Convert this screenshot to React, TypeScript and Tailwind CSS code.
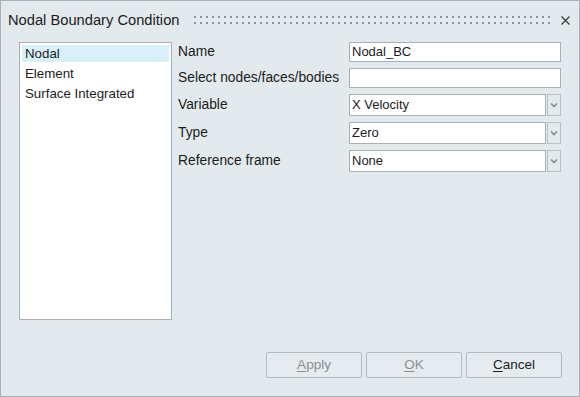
import React from 'react';

const rows = [
  { label: 'Name', value: 'Nodal_BC', kind: 'input', top: 'mt-0' },
  { label: 'Select nodes/faces/bodies', value: '', kind: 'input', top: 'mt-[6px]' },
  { label: 'Variable', value: 'X Velocity', kind: 'select', top: 'mt-[6px]' },
  { label: 'Type', value: 'Zero', kind: 'select', top: 'mt-[6px]' },
  { label: 'Reference frame', value: 'None', kind: 'select', top: 'mt-[6px]' },
];

const Chevron = () => (
  <svg width="8" height="6" viewBox="0 0 8 6" className="text-[#878c91]">
    <path d="M1 1.5 L4 4.5 L7 1.5" fill="none" stroke="currentColor" strokeWidth="1.7" />
  </svg>
);

const App: React.FC = () => {
  const dots = Array.from({ length: 62 });

  return (
    <div
      className="w-[580px] h-[397px] bg-[#e3eaee] border border-[#a9b0b5] flex flex-col text-[13px] text-[#1b1b22]"
      style={{ fontFamily: '"Liberation Sans", Arial, sans-serif' }}
    >
      {/* title bar */}
      <div className="h-[38px] flex items-center pl-[7px] pr-[9px]">
        <span className="text-[14.7px] leading-none">Nodal Boundary Condition</span>
        <div className="flex-1 flex flex-col gap-[4px] ml-[15px] mr-[9px] overflow-hidden">
          {[0, 1].map(r => (
            <div key={r} className="flex gap-[4px]">
              {dots.map((_, i) => (
                <span key={i} className="w-[2px] h-[2px] shrink-0 bg-[#8c9196]" />
              ))}
            </div>
          ))}
        </div>
        <svg width="9" height="9" viewBox="0 0 9 9" className="text-[#3a3d40]">
          <path d="M0.5 0.5 L8.5 8.5 M8.5 0.5 L0.5 8.5" stroke="currentColor" strokeWidth="1.3" />
        </svg>
      </div>

      {/* body */}
      <div className="flex pl-[18px] pt-[3px]">
        <div className="w-[153px] h-[278px] bg-white border border-[#a9b0b5] p-[2px] text-[13.3px]">
          <div className="h-[17px] bg-[#d9f0fa] pl-[3px] leading-[17px]">Nodal</div>
          <div className="h-[20px] pl-[3px] leading-[20px] mt-[2px]">Element</div>
          <div className="h-[20px] pl-[3px] leading-[20px]">Surface Integrated</div>
        </div>

        <div className="flex flex-col ml-[6px]">
          {rows.map(row => (
            <div key={row.label} className={`flex items-center ${row.top}`}>
              <div className="w-[171px] text-[13.8px] leading-[20px]">{row.label}</div>
              {row.kind === 'input' ? (
                <div className="w-[212px] h-[20px] bg-white border border-[#a9b0b5] pl-[2px] leading-[18px]">
                  {row.value}
                </div>
              ) : (
                <div className="flex h-[22px]">
                  <div className="w-[197px] h-[22px] bg-white border border-[#a9b0b5] pl-[2px] leading-[20px]">
                    {row.value}
                  </div>
                  <div className="w-[14px] h-[22px] ml-[1px] border border-[#b9bfc4] flex items-center justify-center">
                    <Chevron />
                  </div>
                </div>
              )}
            </div>
          ))}
        </div>
      </div>

      {/* buttons */}
      <div className="flex justify-end gap-[4px] pr-[17px] mt-[32px]">
        <button className="w-[96px] h-[26px] border border-[#b4babf] rounded-[2px] bg-[#e5ebef] text-[#8a8f94] text-[13.5px]">
          <span className="underline underline-offset-2">A</span>pply
        </button>
        <button className="w-[96px] h-[26px] border border-[#b4babf] rounded-[2px] bg-[#e5ebef] text-[#8a8f94] text-[13.5px]">
          <span className="underline underline-offset-2">O</span>K
        </button>
        <button className="w-[96px] h-[26px] border border-[#b4babf] rounded-[2px] bg-[#e5ebef] text-[13.5px]">
          <span className="underline underline-offset-2">C</span>ancel
        </button>
      </div>
    </div>
  );
};

export default App;
